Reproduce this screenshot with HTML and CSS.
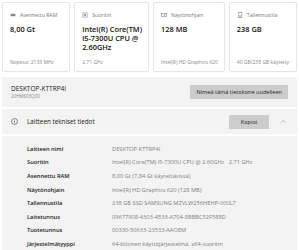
FILE: index.html
```html
<!DOCTYPE html>
<html lang="fi">
<head>
  <meta charset="UTF-8" />
  <meta name="viewport" content="width=device-width, initial-scale=1" />
  <title>Tietoja</title>
  <link rel="stylesheet" href="styles.css">
</head>
<body>

  <!-- yhteenvetokortit -->
  <div class="cards">
    <div class="card">
      <div class="card-label">
        <svg class="card-icon" viewBox="0 0 10 10"><rect x="1" y="3" width="8" height="4" fill="#888"/></svg>
        <span>Asennettu RAM</span>
      </div>
      <div class="card-value">8,00 Gt</div>
      <div class="card-sub">Nopeus: 2133 MHz</div>
    </div>
    <div class="card">
      <div class="card-label">
        <svg class="card-icon" viewBox="0 0 10 10"><rect x="1.5" y="1.5" width="7" height="7" fill="none" stroke="#888"/><rect x="3.5" y="3.5" width="3" height="3" fill="#888"/></svg>
        <span>Suoritin</span>
      </div>
      <div class="card-value">Intel(R) Core(TM)<br>i5-7300U CPU @<br>2.60GHz</div>
      <div class="card-sub">2.71 GHz</div>
    </div>
    <div class="card">
      <div class="card-label">
        <svg class="card-icon" viewBox="0 0 10 10"><rect x="0.5" y="2.5" width="9" height="5" fill="none" stroke="#888"/><circle cx="6" cy="5" r="1.3" fill="#888"/></svg>
        <span>Näytönohjain</span>
      </div>
      <div class="card-value">128 MB</div>
      <div class="card-sub">Intel(R) HD Graphics 620</div>
    </div>
    <div class="card">
      <div class="card-label">
        <svg class="card-icon" viewBox="0 0 10 10"><rect x="2" y="0.5" width="6" height="9" fill="none" stroke="#888"/><rect x="3.5" y="6" width="3" height="1.5" fill="#888"/></svg>
        <span>Tallennustila</span>
      </div>
      <div class="card-value">238 GB</div>
      <div class="card-sub">40 GB/238 GB käytetty</div>
    </div>
  </div>

  <!-- laitteen nimi -->
  <div class="panel name-row">
    <div>
      <div class="device-name">DESKTOP-KTTRP4I</div>
      <div class="device-model">20HMS03Q00</div>
    </div>
    <button class="btn">Nimeä tämä tietokone uudelleen</button>
  </div>

  <!-- tekniset tiedot -->
  <div class="panel spec-head">
    <svg class="info-icon" viewBox="0 0 10 10"><circle cx="5" cy="5" r="4.2" fill="none" stroke="#333" stroke-width="0.8"/><rect x="4.6" y="4.2" width="0.8" height="3" fill="#333"/><rect x="4.6" y="2.6" width="0.8" height="0.8" fill="#333"/></svg>
    <span class="spec-title">Laitteen tekniset tiedot</span>
    <button class="btn btn-copy">Kopioi</button>
    <svg class="chevron" viewBox="0 0 10 10"><path d="M2 6.5 L5 3.5 L8 6.5" fill="none" stroke="#888" stroke-width="0.8"/></svg>
  </div>

  <div class="panel spec-list">
    <div class="spec-row"><span class="spec-key">Laitteen nimi</span><span class="spec-val">DESKTOP-KTTRP4I</span></div>
    <div class="spec-row"><span class="spec-key">Suoritin</span><span class="spec-val">Intel(R) Core(TM) i5-7300U CPU @ 2.60GHz&nbsp;&nbsp;&nbsp;2.71 GHz</span></div>
    <div class="spec-row"><span class="spec-key">Asennettu RAM</span><span class="spec-val">8,00 Gt (7,84 Gt käytettävissä)</span></div>
    <div class="spec-row"><span class="spec-key">Näytönohjain</span><span class="spec-val">Intel(R) HD Graphics 620 (128 MB)</span></div>
    <div class="spec-row"><span class="spec-key">Tallennustila</span><span class="spec-val">238 GB SSD SAMSUNG MZVLW256HEHP-000L7</span></div>
    <div class="spec-row"><span class="spec-key">Laitetunnus</span><span class="spec-val">09677908-4303-4533-A704-8BBBC52F588D</span></div>
    <div class="spec-row"><span class="spec-key">Tuotetunnus</span><span class="spec-val">00330-50633-23533-AAOEM</span></div>
    <div class="spec-row"><span class="spec-key">Järjestelmätyyppi</span><span class="spec-val">64-bittinen käyttöjärjestelmä, x64-suoritin</span></div>
  </div>

</body>
</html>
```

FILE: styles.css
```css
* {
  box-sizing: border-box;
  margin: 0;
  padding: 0;
}

body {
  font-family: 'Open Sans', 'Noto Sans', sans-serif;
  background: #fff;
  color: #1a1a1a;
  height: 250px;
  overflow: hidden;
}

.cards {
  display: grid;
  grid-template-columns: repeat(4, 1fr);
  gap: 4px;
  padding: 2px 2px 0;
}

.card {
  height: 70px;
  border: 1px solid #e6e6e6;
  border-radius: 2px;
  background: #fff;
  padding: 8px 6px 6px 7px;
  display: flex;
  flex-direction: column;
}

.card-label {
  display: flex;
  align-items: center;
  gap: 4px;
  font-size: 5.2px;
  color: #777;
}

.card-icon {
  width: 6px;
  height: 6px;
}

.card-value {
  margin-top: 6px;
  font-size: 7.4px;
  font-weight: 600;
  line-height: 9.2px;
  color: #111;
  white-space: nowrap;
}

.card-sub {
  margin-top: auto;
  font-size: 5px;
  color: #888;
  white-space: nowrap;
}

.panel {
  background: #f3f3f3;
  margin: 0 2px;
}

.name-row {
  margin-top: 5px;
  height: 30px;
  display: flex;
  align-items: center;
  justify-content: space-between;
  padding: 0 9px;
}

.device-name {
  font-size: 6.5px;
  color: #1a1a1a;
  line-height: 8px;
}

.device-model {
  font-size: 4.5px;
  color: #888;
  line-height: 6px;
}

.btn {
  font-family: inherit;
  font-size: 5.6px;
  color: #222;
  background: #cccccc;
  border: none;
  height: 14px;
  padding: 0 6px;
}

.spec-head {
  margin-top: 2px;
  height: 25px;
  display: flex;
  align-items: center;
  padding: 0 10px 0 9px;
}

.info-icon {
  width: 7px;
  height: 7px;
}

.spec-title {
  margin-left: 9px;
  font-size: 6.3px;
  color: #1a1a1a;
}

.btn-copy {
  margin-left: auto;
  width: 40px;
  padding: 0;
}

.chevron {
  width: 7px;
  height: 7px;
  margin-left: 11px;
}

.spec-list {
  margin-top: 2px;
  padding: 6px 0 0 25px;
  height: 120px;
}

.spec-row {
  display: flex;
  height: 13.6px;
  align-items: center;
  font-size: 5.7px;
  white-space: nowrap;
}

.spec-key {
  width: 85px;
  font-weight: 600;
  color: #1a1a1a;
}

.spec-val {
  color: #808080;
}
```
